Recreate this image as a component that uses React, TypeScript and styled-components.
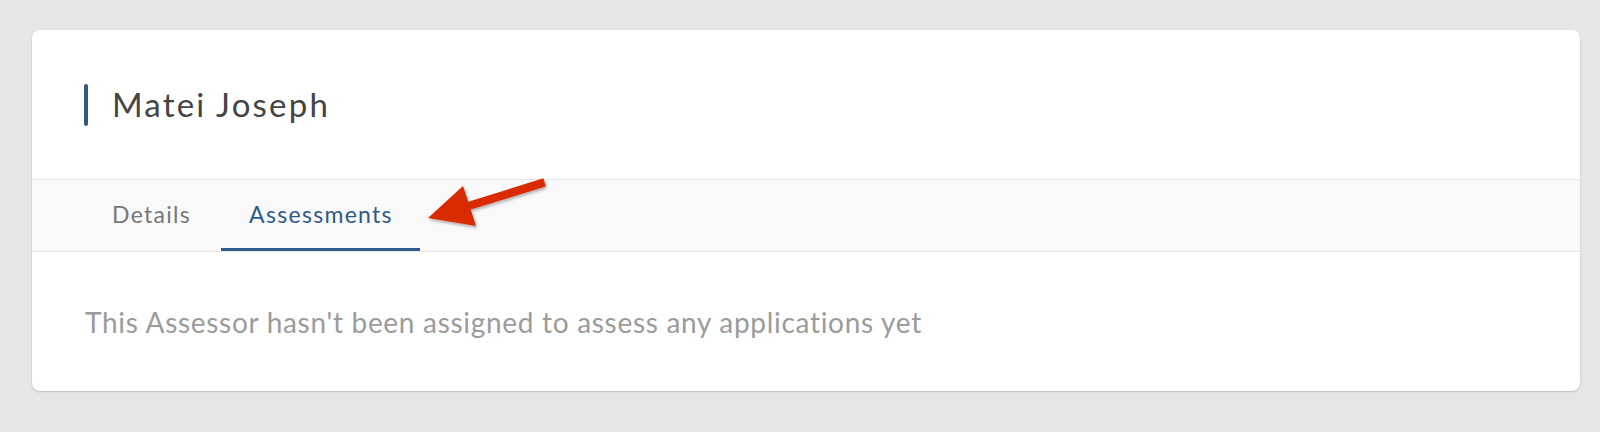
import React from "react";
import styled, { createGlobalStyle } from "styled-components";

const Global = createGlobalStyle`
  html, body { margin: 0; padding: 0; background: #e6e6e6; }
  body { font-family: "Lato", "Noto Sans", sans-serif; }
`;

const Page = styled.div`
  padding: 30px 20px 40px 32px;
`;

const Card = styled.div`
  position: relative;
  background: #ffffff;
  border-radius: 8px;
  box-shadow: 0 1px 2px rgba(0, 0, 0, 0.18);
  overflow: hidden;
`;

const Header = styled.div`
  display: flex;
  align-items: center;
  height: 149px;
  padding-left: 52px;
  border-bottom: 1px solid #e6e6e6;
`;

const NameBar = styled.span`
  width: 4px;
  height: 42px;
  border-radius: 2px;
  background: #2d5a8c;
  margin-right: 24px;
`;

const Name = styled.h1`
  margin: 0 0 1px;
  font-size: 33px;
  font-weight: 400;
  color: #444444;
  letter-spacing: 2.2px;
`;

const TabBar = styled.div`
  display: flex;
  height: 71px;
  padding-left: 52px;
  background: #f9f9f9;
  border-bottom: 1px solid #e6e6e6;
`;

const Tab = styled.div<{ $active?: boolean }>`
  display: flex;
  align-items: center;
  padding: 0 27px 0 28px;
  margin-right: 3px;
  font-size: 23px;
  letter-spacing: 1.3px;
  color: ${(p) => (p.$active ? "#2f5b8a" : "#777777")};
  border-bottom: 3px solid ${(p) => (p.$active ? "#2f5b8a" : "transparent")};
  box-sizing: border-box;
`;

const Content = styled.div`
  display: flex;
  align-items: center;
  height: 139px;
  padding-left: 53px;
`;

const Empty = styled.p`
  margin: 0;
  font-size: 28px;
  font-weight: 400;
  letter-spacing: 0.7px;
  color: #9b9b9b;
`;

const Arrow = styled.svg`
  position: absolute;
  left: 388px;
  top: 140px;
  overflow: visible;
`;

export default function App() {
  return (
    <>
      <Global />
      <Page>
        <Card>
          <Header>
            <NameBar />
            <Name>Matei Joseph</Name>
          </Header>
          <TabBar>
            <Tab>Details</Tab>
            <Tab $active>Assessments</Tab>
          </TabBar>
          <Content>
            <Empty>This Assessor hasn't been assigned to assess any applications yet</Empty>
          </Content>
          <Arrow width="135" height="65" viewBox="0 0 135 65">
            <defs>
              <filter id="sh" x="-20%" y="-20%" width="140%" height="160%">
                <feDropShadow dx="1" dy="2" stdDeviation="1.5" floodColor="#000" floodOpacity="0.3" />
              </filter>
            </defs>
            <polygon
              points="8,48 43,16 48.3,31.8 123.4,8.3 125.8,16.5 50.7,39.4 56,56"
              fill="#da2c06"
              filter="url(#sh)"
            />
          </Arrow>
        </Card>
      </Page>
    </>
  );
}
